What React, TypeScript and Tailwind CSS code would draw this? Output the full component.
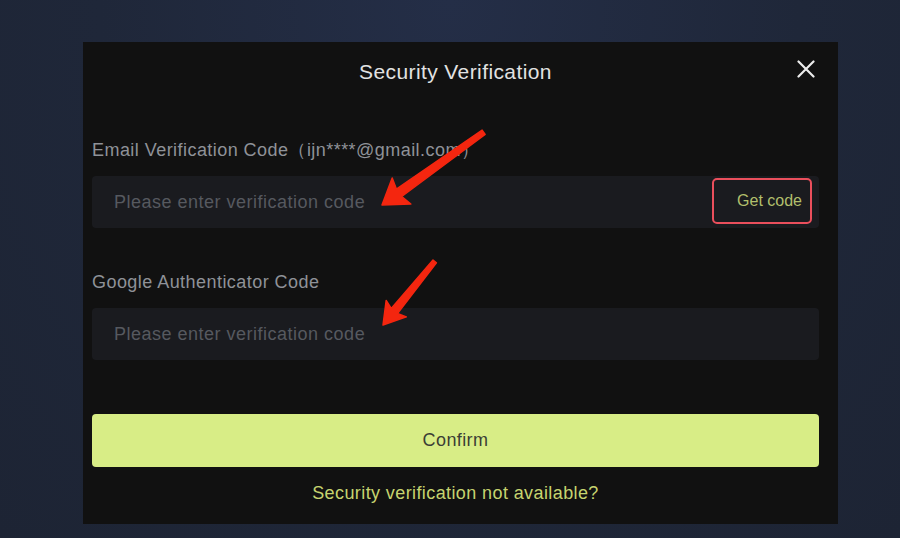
import React from "react";

function Arrow({ x, y, angle, len, head, headW, shaftTail, shaftHead }: { x: number; y: number; angle: number; len: number; head: number; headW: number; shaftTail: number; shaftHead: number }) {
  const pts = [
    [0, 0],
    [head, -headW],
    [head - 3, -shaftHead],
    [len, -shaftTail],
    [len, shaftTail],
    [head - 3, shaftHead],
    [head, headW],
  ]
    .map((p) => p.join(","))
    .join(" ");
  return (
    <g transform={`translate(${x} ${y}) rotate(${angle})`}>
      <polygon points={pts} fill="#f4260f" stroke="#f4260f" strokeWidth="1.5" strokeLinejoin="round" />
    </g>
  );
}

export default function App() {
  return (
    <div
      className="relative w-full min-h-[538px] h-[538px] overflow-hidden bg-[radial-gradient(ellipse_at_top,#242e47_0%,#1f2739_55%,#1d2434_100%)] pt-[42px] pl-[83px]"
      style={{ fontFamily: '"Liberation Sans", Arial, sans-serif' }}
    >
      <div className="relative flex h-[482px] w-[755px] flex-col bg-[#111111] pl-[9px] pr-[19px]">
        <div className="relative flex h-[60px] items-center justify-center">
          <h2 className="text-[21px] tracking-[0.4px] text-[#e2e2e2]">Security Verification</h2>
          <button className="absolute right-[4px] top-[18px] flex h-[18px] w-[18px] items-center justify-center" aria-label="close">
            <svg width="18" height="18" viewBox="0 0 18 18">
              <path d="M1.5 1.5 L16.5 16.5 M16.5 1.5 L1.5 16.5" stroke="#ececec" strokeWidth="2.2" strokeLinecap="round" />
            </svg>
          </button>
        </div>

        <label className="mt-[36px] h-[24px] text-[18px] leading-[24px] tracking-[0.45px] text-[#8f9298]">
          Email Verification Code（ijn****@gmail.com）
        </label>
        <div className="mt-[14px] flex h-[52px] items-center rounded-[4px] bg-[#1a1b1f] pl-[22px] pr-[7px]">
          <input
            className="min-w-0 flex-1 bg-transparent text-[18px] tracking-[0.5px] text-[#cfd0d3] outline-none placeholder:text-[#56595f]"
            placeholder="Please enter verification code"
          />
          <button className="mt-[-2px] flex h-[46px] items-center rounded-[5px] border-2 border-[#ea4f5c] pl-[23px] pr-[8px] text-[16px] text-[#b1bf6c]">
            Get code
          </button>
        </div>

        <label className="mt-[42px] h-[24px] text-[18px] leading-[24px] tracking-[0.45px] text-[#8f9298]">
          Google Authenticator Code
        </label>
        <div className="mt-[14px] flex h-[52px] items-center rounded-[4px] bg-[#1a1b1f] pl-[22px] pr-[7px]">
          <input
            className="min-w-0 flex-1 bg-transparent text-[18px] tracking-[0.5px] text-[#cfd0d3] outline-none placeholder:text-[#56595f]"
            placeholder="Please enter verification code"
          />
        </div>

        <button className="mt-[54px] flex h-[53px] items-center justify-center rounded-[4px] bg-[#d8ed86] text-[18px] tracking-[0.4px] text-[#3b3e35]">
          Confirm
        </button>
        <div className="mt-[14px] h-[24px] text-center text-[18px] leading-[24px] tracking-[0.4px] text-[#c6d46f]">
          Security verification not available?
        </div>

        <svg className="pointer-events-none absolute left-[-83px] top-[-42px]" width="900" height="538" viewBox="0 0 900 538">
          <Arrow x={382} y={205} angle={-35.6} len={125} head={24} headW={16} shaftTail={2.6} shaftHead={4.6} />
          <Arrow x={383} y={325} angle={-50.9} len={82} head={21} headW={13} shaftTail={2.2} shaftHead={4} />
        </svg>
      </div>
    </div>
  );
}
